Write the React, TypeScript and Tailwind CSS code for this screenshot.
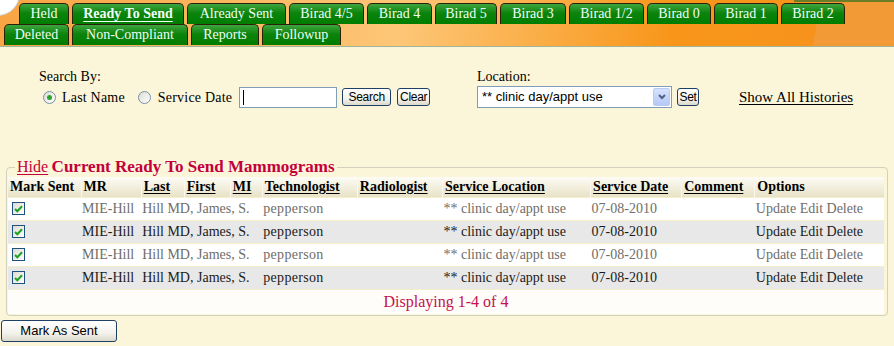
import React from "react";

const ROW1: [string, number][] = [
  ["Held", 50],
  ["Ready To Send", 112],
  ["Already Sent", 99],
  ["Birad 4/5", 75],
  ["Birad 4", 65],
  ["Birad 5", 62],
  ["Birad 3", 66],
  ["Birad 1/2", 75],
  ["Birad 0", 64],
  ["Birad 1", 64],
  ["Birad 2", 64],
];

const ROW2: [string, number][] = [
  ["Deleted", 65],
  ["Non-Compliant", 116],
  ["Reports", 68],
  ["Followup", 79],
];

const COLS: [string, number, boolean][] = [
  ["Mark Sent", 73, false],
  ["MR", 60, false],
  ["Last", 43, true],
  ["First", 46, true],
  ["MI", 32, true],
  ["Technologist", 95, true],
  ["Radiologist", 85, true],
  ["Service Location", 148, true],
  ["Service Date", 91, true],
  ["Comment", 73, true],
  ["Options", 129, false],
];

const Tab = ({ label, width, active }: { label: string; width: number; active?: boolean }) => (
  <div
    className="h-[21px] shrink-0 rounded-t-[5px] border border-b-0 border-[#2b2008] bg-[linear-gradient(#3fa53f,#0c840c_45%,#007c00)] text-center text-[14px] leading-[20px] text-[#effff8]"
    style={{ width }}
  >
    {active ? <span className="font-bold underline underline-offset-[3px]">{label}</span> : label}
  </div>
);

const XpButton = ({ children, className }: { children: React.ReactNode; className?: string }) => (
  <button
    className={
      "flex items-center justify-center rounded-[3px] border border-[#1f3f66] bg-[linear-gradient(#ffffff,#f3f2ec_60%,#dcd9cc)] font-['Liberation_Sans'] text-[12px] tracking-[-0.3px] text-black " +
      (className ?? "")
    }
  >
    {children}
  </button>
);

const Radio = ({ checked }: { checked?: boolean }) => (
  <span className="flex h-[13px] w-[13px] items-center justify-center rounded-full border border-[#7d8fa5] bg-[linear-gradient(135deg,#dcdcd6,#ffffff)]">
    {checked && <span className="h-[5px] w-[5px] rounded-full bg-[#2aa52a]" />}
  </span>
);

const Check = () => (
  <span className="flex h-[13px] w-[13px] items-center justify-center border border-[#1c5180] bg-[linear-gradient(135deg,#dedbd0,#ffffff)]">
    <svg width="9" height="8" viewBox="0 0 9 8">
      <path d="M1 4 L3.3 6.3 L8 1.3" stroke="#21a121" strokeWidth="2" fill="none" />
    </svg>
  </span>
);

const rows = [0, 1, 2, 3];

export default function App() {
  return (
    <div className="h-[346px] w-[894px] overflow-hidden bg-[#fbf6d9] font-['Liberation_Serif',serif] text-[14px] text-black">
      {/* header with tabs */}
      <div className="relative h-[47px] overflow-hidden border-b border-[#9fb59a] bg-[linear-gradient(100deg,#f8a443_0%,#fdc677_45%,#f8961a_75%,#f7931c_91%,#f29a36_91%)]">
        <div className="absolute -left-[24px] -top-[28px] h-[44px] w-[44px] rounded-full border border-[#c9c9c9] bg-white" />
        <div className="absolute right-0 top-0 h-[2px] w-[100px] bg-[#6b7d26]" />
        <div className="relative flex gap-[3px] pl-[19px] pt-[3px]">
          {ROW1.map(([l, w]) => (
            <Tab key={l} label={l} width={w} active={l === "Ready To Send"} />
          ))}
        </div>
        <div className="relative flex gap-[3px] pl-[4px]">
          {ROW2.map(([l, w]) => (
            <Tab key={l} label={l} width={w} />
          ))}
        </div>
      </div>

      {/* search bar */}
      <div className="flex pt-[21px]">
        <div className="w-[438px] pl-[39px]">
          <div className="h-[17px] leading-[17px]">Search By:</div>
          <div className="mt-[1px] flex h-[22px] items-center tracking-[0.2px]">
            <span className="ml-[4px]"><Radio checked /></span>
            <span className="ml-[6px]">Last Name</span>
            <span className="ml-[13px]"><Radio /></span>
            <span className="ml-[7px]">Service Date</span>
            <div className="ml-[7px] flex h-[21px] w-[98px] items-center border border-[#7f9db9] bg-white pl-[3px]">
              <span className="h-[15px] w-px bg-black" />
            </div>
            <XpButton className="ml-[5px] h-[18px] w-[49px]">Search</XpButton>
            <XpButton className="ml-[6px] h-[18px] w-[33px]">Clear</XpButton>
          </div>
        </div>
        <div className="pl-[39px]">
          <div className="h-[17px] leading-[17px]">Location:</div>
          <div className="flex h-[23px] items-center">
            <div className="flex h-[22px] w-[195px] items-center justify-between border border-[#7f9db9] bg-white pl-[4px] pr-[1px] font-['Liberation_Sans'] text-[13px]">
              <span>** clinic day/appt use</span>
              <span className="flex h-[18px] w-[17px] items-center justify-center rounded-[2px] border border-[#b8cbf5] bg-[linear-gradient(#d6e2fd,#b5c9f7)]">
                <svg width="8" height="6" viewBox="0 0 8 6">
                  <path d="M1 1 L4 4 L7 1" stroke="#4d6185" strokeWidth="2" fill="none" />
                </svg>
              </span>
            </div>
            <XpButton className="ml-[5px] h-[18px] w-[22px]">Set</XpButton>
            <span className="ml-[40px] mt-[2px] text-[15px] underline underline-offset-[2px]">Show All Histories</span>
          </div>
        </div>
      </div>

      {/* results */}
      <fieldset className="mx-[6px] mt-[49px] rounded-[4px] border border-[#d3d0bd] px-px pb-px">
        <legend className="ml-[7px] px-[2px] leading-[19px] text-[#c4003c]">
          <span className="text-[16px] underline underline-offset-[2px]">Hide</span>{" "}
          <span className="text-[17px] font-bold">Current Ready To Send Mammograms</span>
        </legend>
        <table className="w-[876px] table-fixed border-collapse bg-[#fefdf9]">
          <colgroup>
            {COLS.map(([h, w]) => (
              <col key={h} style={{ width: w }} />
            ))}
          </colgroup>
          <thead>
            <tr className="h-[20px] bg-[linear-gradient(#fdfcf6,#e8e2c6)]">
              {COLS.map(([h, , u]) => (
                <th key={h} className="border-r border-[#faf8ee] pl-[2px] text-left align-middle font-bold leading-[16px] last:border-r-0">
                  <span className={u ? "underline underline-offset-[2px]" : ""}>{h}</span>
                </th>
              ))}
            </tr>
          </thead>
          <tbody>
            {rows.map((i) => (
              <tr
                key={i}
                className={
                  "h-[23px] border-t border-[#f3eecb] " +
                  (i % 2 ? "bg-[#e8e8e8] text-[#1b1b1b]" : "bg-white text-[#6f6d68]")
                }
              >
                <td className="pl-[4px]"><Check /></td>
                <td className="pl-[1px]">MIE-Hill</td>
                <td colSpan={3} className="pl-[1px] whitespace-nowrap">Hill MD, James, S.</td>
                <td className="pl-[1px] tracking-[0.3px]">pepperson</td>
                <td />
                <td className="pl-[1px] whitespace-nowrap">** clinic day/appt use</td>
                <td className="pl-[1px]">07-08-2010</td>
                <td />
                <td className="pl-[1px] whitespace-nowrap">Update Edit Delete</td>
              </tr>
            ))}
            <tr className="h-[24px] border-t border-[#f3eecb]">
              <td colSpan={11} className="text-center text-[16px] text-[#c5124e]">Displaying 1-4 of 4</td>
            </tr>
          </tbody>
        </table>
      </fieldset>

      <XpButton className="ml-[1px] mt-[4px] h-[22px] w-[116px] !text-[13px] !tracking-normal">Mark As Sent</XpButton>
    </div>
  );
}
